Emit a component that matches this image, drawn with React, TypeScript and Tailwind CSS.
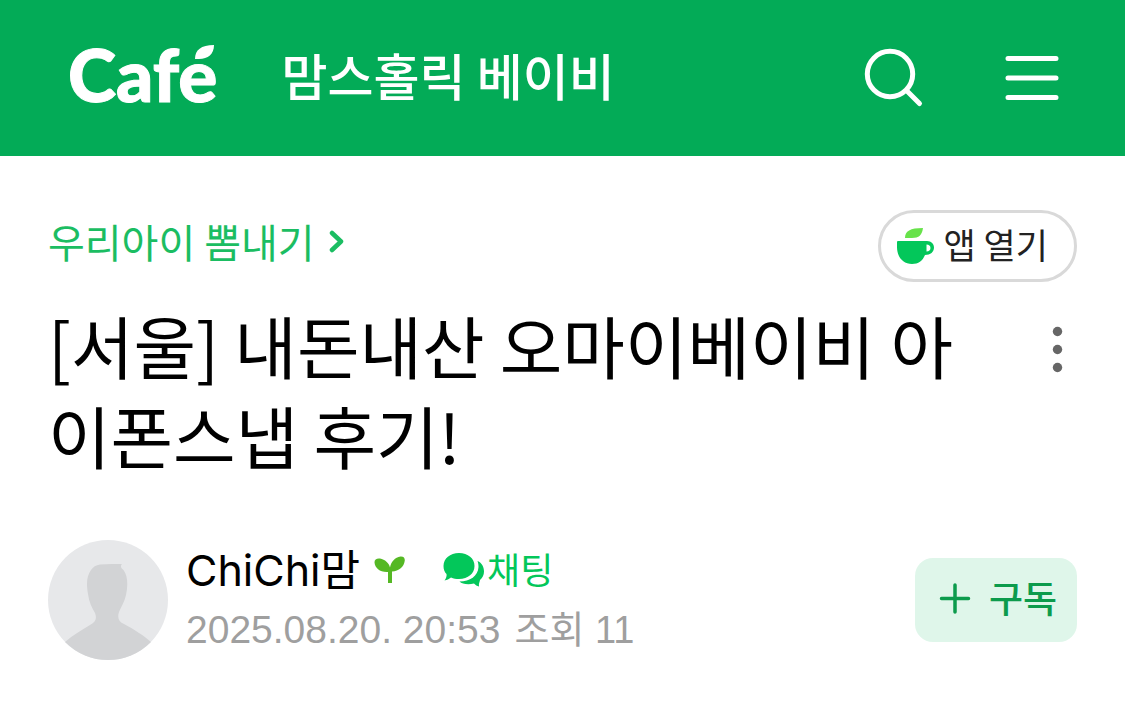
import React from "react";

const sans = "font-['Noto_Sans_CJK_KR',sans-serif]";

function CafeLogo() {
  return (
    <a href="#" aria-label="Café" className="relative block pb-2 font-['Lato',sans-serif] text-[73px] leading-[80px] font-black [-webkit-text-stroke:1px_white]">
      Cafe
      <svg className="absolute top-2.5 right-0.5 h-4 w-5" viewBox="0 0 20 16" fill="currentColor" aria-hidden="true">
        <path d="M0 15C0 6 6 1 19 1C19 10 13 15 4 15Z" />
      </svg>
    </a>
  );
}

function Header() {
  return (
    <header className="flex h-[156px] items-center bg-[#03ab57] pr-[62px] pl-[68px] text-white">
      <CafeLogo />
      <a href="#" className="ml-16 pb-2 text-[50px] leading-[72px] font-medium">맘스홀릭 베이비</a>
      <button type="button" aria-label="검색" className="ml-auto">
        <svg className="size-16" viewBox="0 0 64 64" fill="none" stroke="currentColor" strokeWidth="5" strokeLinecap="round" aria-hidden="true">
          <circle cx="27" cy="28" r="22.7" />
          <path d="M44 45L56.500 57.500" />
        </svg>
      </button>
      <button type="button" aria-label="메뉴" className="ml-[74px]">
        <svg className="h-16 w-[62px]" viewBox="0 0 62 64" fill="none" stroke="currentColor" strokeWidth="5" strokeLinecap="round" aria-hidden="true">
          <path d="M7 12.500H55M7 32H55M7 51.500H55" />
        </svg>
      </button>
    </header>
  );
}

function CupIcon() {
  return (
    <svg className="h-10 w-[38px] shrink-0" viewBox="0 0 38 40" aria-hidden="true">
      <path d="M9 12C9 5 14 2 27 2C26 9 23 12 16 12Z" fill="#67e24a" />
      <path fill="#03c75a" fillRule="evenodd" d="M2 15H31C35.500 15 38 18 38 21.500C38 26 34.500 29 29 29C26.500 35 22.500 38 16 38C7 38 1 31 1 21V16Q1 15 2 15ZM30.500 18.500V25.500C33 25.500 34.500 24 34.500 22C34.500 20 33 18.500 30.500 18.500Z" />
    </svg>
  );
}

function Avatar() {
  return (
    <svg className="size-[120px] shrink-0" viewBox="0 0 120 120" role="img" aria-label="프로필 사진">
      <defs>
        <clipPath id="avatar-clip"><circle cx="60" cy="60" r="60" /></clipPath>
      </defs>
      <g clipPath="url(#avatar-clip)">
        <rect width="120" height="120" fill="#e7e8ea" />
        <path fill="#d2d3d5" d="M52 24.500C60 23.500 68 24 74 24C72 26 73 28 75.500 30C80 36 80 46 78 55C76.500 62 73 67 71 72C69 78 71 82 76 84C87 90 95 95 103 102V122H17V102C25 95 34 90 42 85C48 82 49 78 47 73C44 68 41 62 40 54C38 42 39 36 43 30C45 27 48 25 52 24.500Z" />
      </g>
    </svg>
  );
}

function Sprout() {
  return (
    <svg className="h-[30px] w-8" viewBox="0 0 32 30" aria-label="새싹 멤버" role="img">
      <g fill="#55b824">
        <path d="M14 17C6 17.500 1 13 .5 7.500C.3 4.500 3 3 6 3.500C11 4.500 15 8 16 12.500C17 7 21 2 26.500 1.500C29.500 1.300 31 3 30.800 5.500C30 12 25 16 18 16.500V28H14Z" />
      </g>
    </svg>
  );
}

function ChatIcon() {
  return (
    <svg className="h-9 w-[42px]" viewBox="0 0 42 36" fill="#03c75a" aria-hidden="true">
      <path d="M16 1C25 1 31.500 6.500 31.500 14C31.500 21.500 25 27 16 27C13 27 10.500 26.500 8 25.500C6 27 4 28 1.500 28.500C3 26.500 4 24 3.500 22C1.500 20 .5 17.500 .5 14C.5 6.500 7 1 16 1Z" />
      <path d="M34.500 9C39 11 41 15 41 19.500C41 23 39.500 26 37 28C36.500 30.500 35.500 32 36 34.500C34 34 32.500 33 31 31.500C25 33 19 32 16.500 29.500C27 29.500 35 24 35.500 15C35.500 13 35.300 11 34.500 9Z" />
    </svg>
  );
}

export default function App() {
  return (
    <div className={`min-h-screen bg-white ${sans}`}>
      <Header />
      <main className="px-12 pt-[54px] pb-14">
        <div className="flex items-start justify-between">
          <a href="#" className="flex items-center gap-3.5 text-[40px] leading-[62px] text-[#1bbd62]">
            우리아이 뽐내기
            <svg className="h-6 w-4" viewBox="0 0 16 24" fill="none" stroke="currentColor" strokeWidth="4.500" strokeLinecap="round" strokeLinejoin="round" aria-hidden="true">
              <path d="M3 4L12 12.500L3 21" />
            </svg>
          </a>
          <button type="button" className="flex h-[72px] items-center gap-2.5 rounded-full border-3 border-[#d9d9d9] pr-[26px] pl-[15px] text-[35px] leading-[48px] text-[#222]">
            <CupIcon />
            <span className="pb-1">앱 열기</span>
          </button>
        </div>
        <div className="mt-[18px] flex items-start justify-between">
          <h1 className="w-[920px] text-[68px] leading-[90px] break-all text-black">
            [서울] 내돈내산 오마이베이비 아이폰스냅 후기!
          </h1>
          <button type="button" aria-label="더보기" className="mt-[22px] w-10">
            <svg className="h-14 w-10" viewBox="0 0 40 56" fill="#666" aria-hidden="true">
              <circle cx="20.500" cy="9.500" r="4.700" />
              <circle cx="20.500" cy="27.500" r="4.700" />
              <circle cx="20.500" cy="45.500" r="4.700" />
            </svg>
          </button>
        </div>
        <section className="mt-15 flex items-center">
          <Avatar />
          <div className="ml-[18px]">
            <div className="flex h-[60px] items-center">
              <a href="#" className="font-['Inter','Noto_Sans_CJK_KR',sans-serif] text-[43px] leading-[60px] text-black">ChiChi맘</a>
              <span className="ml-3.5"><Sprout /></span>
              <button type="button" className="ml-[37px] flex items-center gap-0.5 text-[36px] leading-[60px] text-[#03c75a]">
                <ChatIcon />
                <span className="pb-1">채팅</span>
              </button>
            </div>
            <p className="flex gap-3.5 font-['Liberation_Sans','Noto_Sans_CJK_KR',sans-serif] text-[38px] leading-[60px] text-[#9f9f9f]">
              <span className="text-[39px]">2025.08.20. 20:53</span>
              <span>조회 11</span>
            </p>
          </div>
          <button type="button" className="ml-auto flex h-[84px] items-center gap-4 rounded-[18px] bg-[#dff6ea] pr-5 pl-[18px] text-[37px] leading-[60px] font-medium text-[#0c9b4c]">
            <svg className="size-10" viewBox="0 0 40 40" fill="none" stroke="currentColor" strokeWidth="3.500" strokeLinecap="round" aria-hidden="true">
              <path d="M22 5V32M8.500 18.500H35.500" />
            </svg>
            <span className="pb-1.5">구독</span>
          </button>
        </section>
      </main>
    </div>
  );
}
